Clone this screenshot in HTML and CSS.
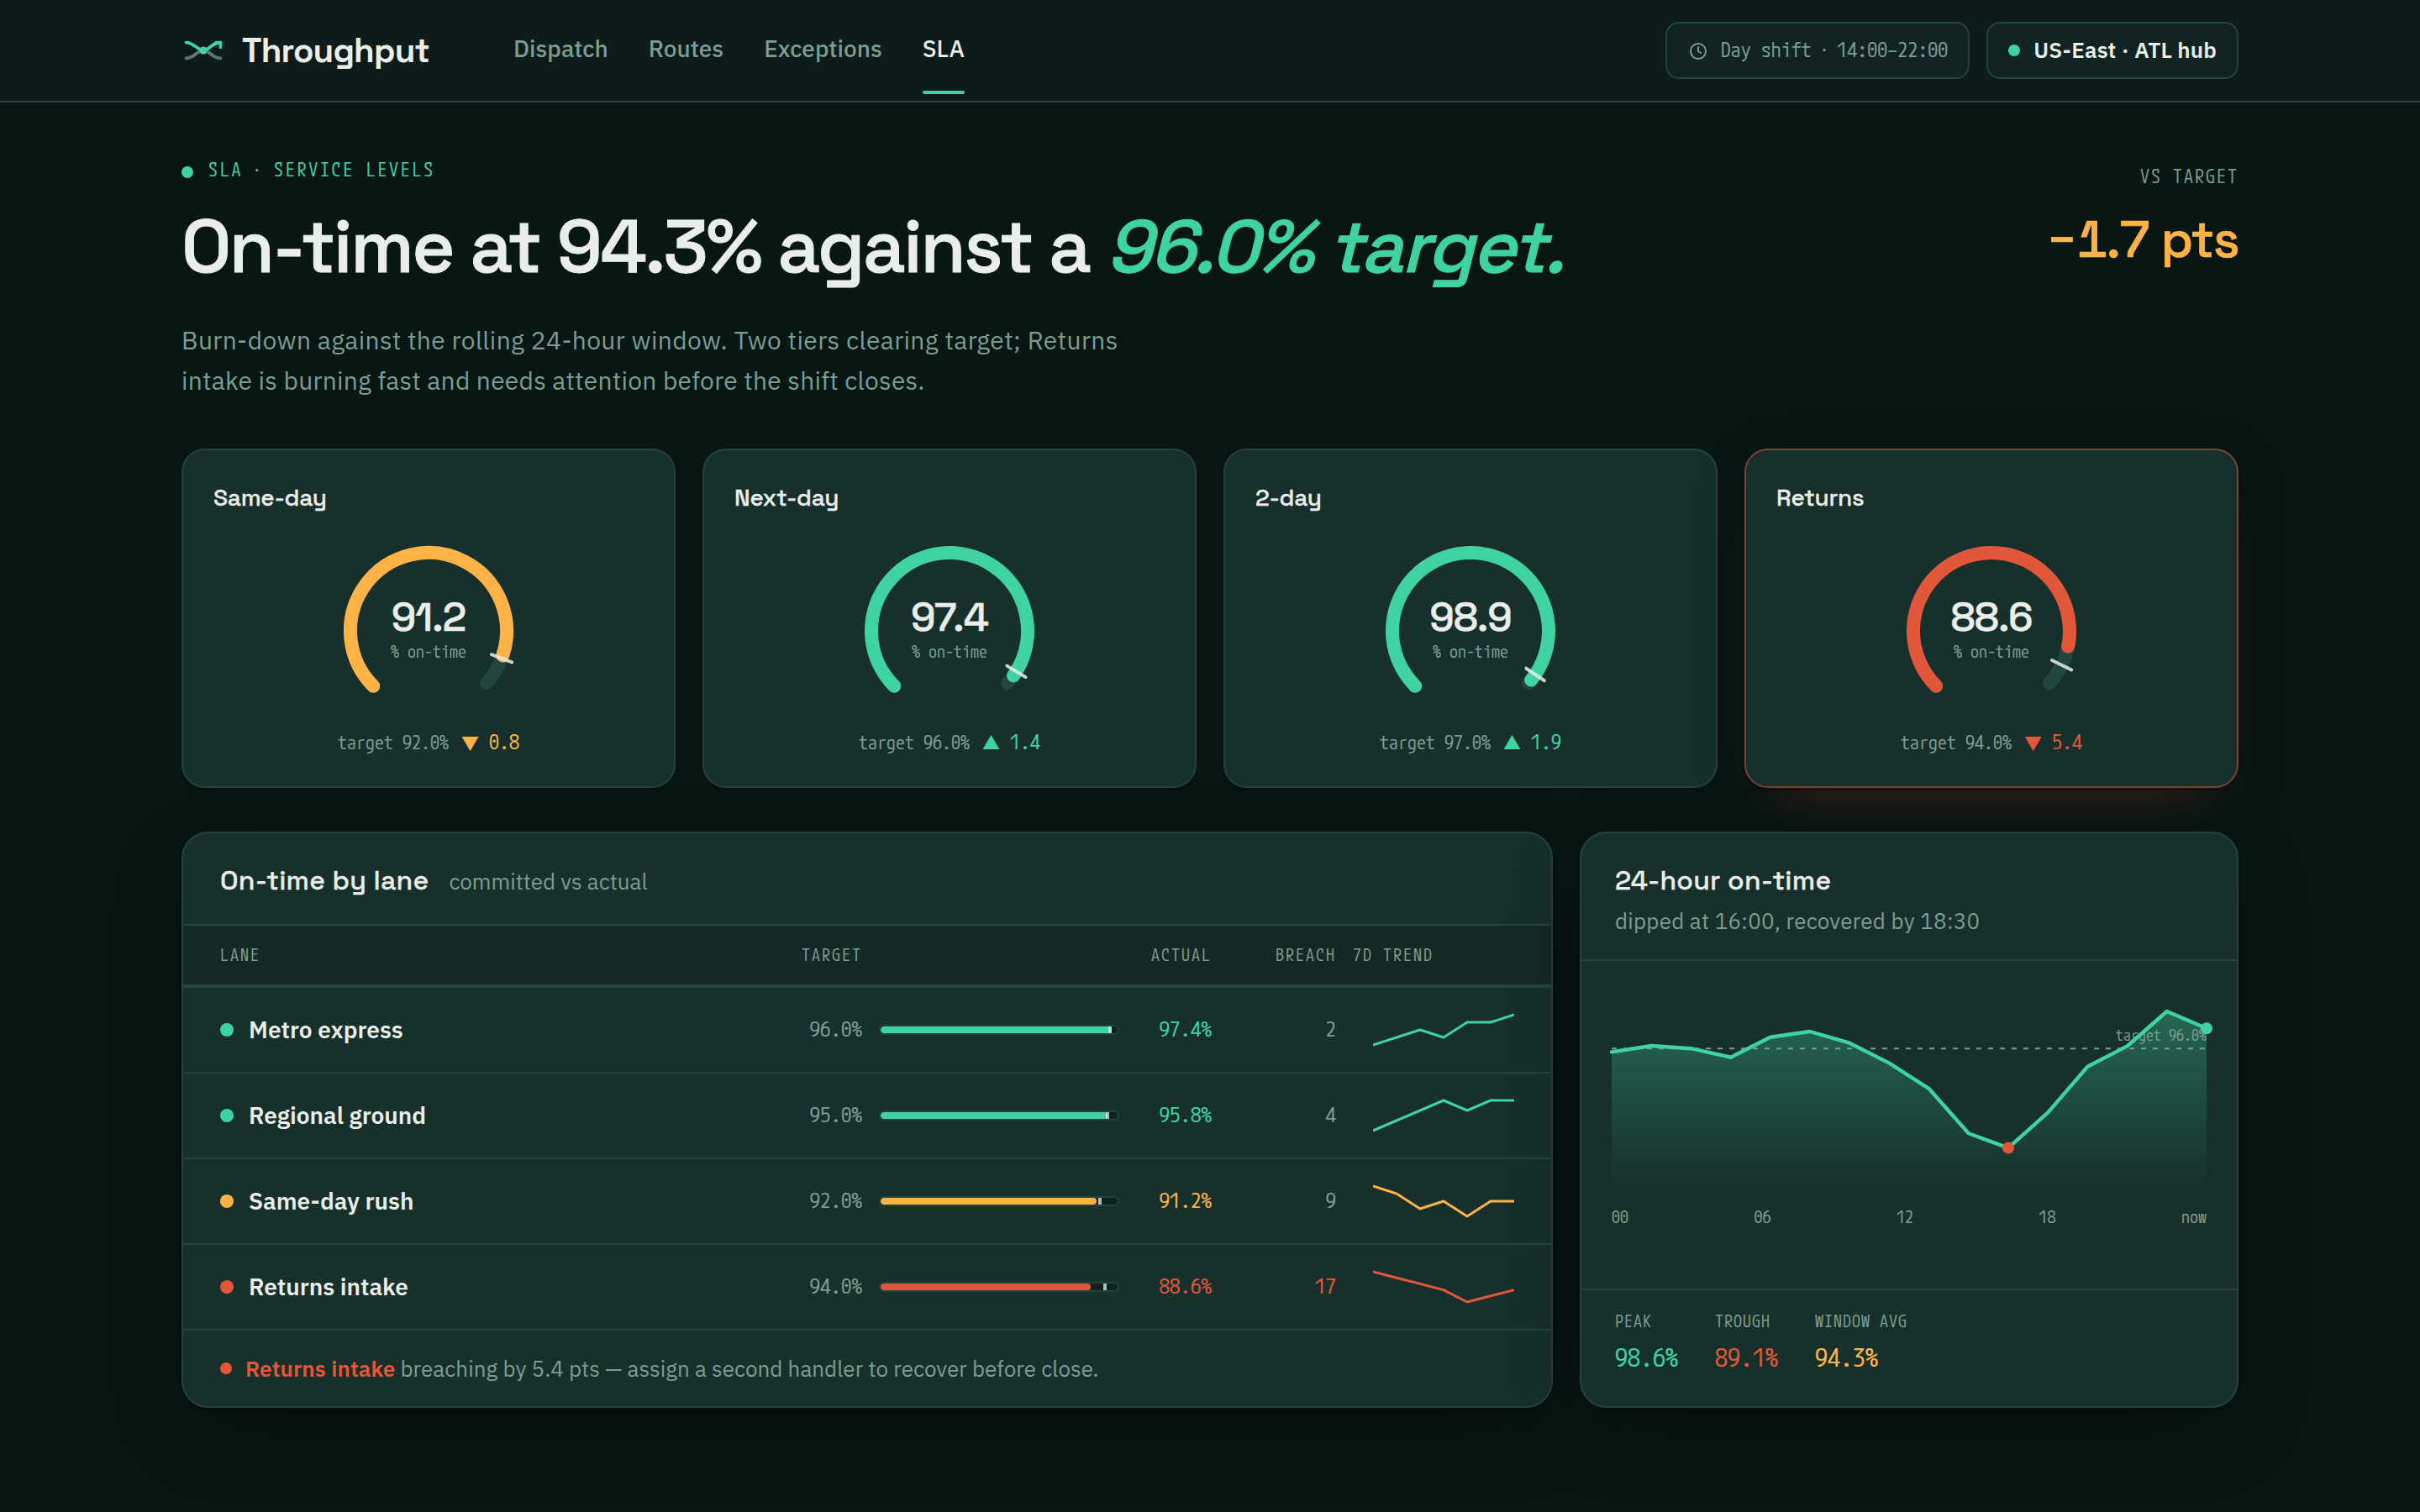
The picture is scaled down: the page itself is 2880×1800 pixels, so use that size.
FILE: index.html
```html
<!DOCTYPE html>
<html lang="en">
<head>
    <meta charset="UTF-8">
    <meta name="viewport" content="width=device-width, initial-scale=1.0">
    <title>Throughput - SLA</title>
    <link rel="stylesheet" href="styles.css">
</head>
<body>
    <header class="topbar">
        <div class="brand">
            <svg width="52" height="48" viewBox="0 0 52 48" fill="none" stroke-width="3.8" stroke-linecap="round">
                <path d="M5.5 33.3C15 33.3 19 24 26 24S37 33.3 46.5 33.3" stroke="#7c9d92" stroke-opacity="0.7"/>
                <path d="M5.5 14.6C15 14.6 19 24 26 24S36 14.6 46.5 14.6" stroke="#3fd3a2"/>
                <path d="M41 14.6h5.5v5.6" stroke="#3fd3a2" stroke-linejoin="round"/>
                <circle cx="26" cy="24" r="4.6" fill="#3fd3a2"/>
            </svg>
            <span class="brand-name">Throughput</span>
        </div>
        <nav class="nav">
            <a class="nav-link">Dispatch</a>
            <a class="nav-link">Routes</a>
            <a class="nav-link">Exceptions</a>
            <a class="nav-link active">SLA</a>
        </nav>
        <div class="chips">
            <div class="chip shift">
                <svg width="24" height="24" viewBox="0 0 24 24" fill="none" stroke="#7c9d92" stroke-width="2" stroke-linecap="round" stroke-linejoin="round">
                    <circle cx="13" cy="13" r="9"/>
                    <path d="M13 8v5l3.2 2"/>
                </svg>
                <span class="chip-text">Day shift <span class="mid">·</span> 14:00–22:00</span>
            </div>
            <div class="chip hub">
                <i class="dot green"></i>
                <span class="chip-text">US-East · ATL hub</span>
            </div>
        </div>
    </header>

    <main class="page">
        <section class="hero">
            <div>
                <div class="eyebrow"><i class="dot green"></i><span>SLA <span class="mid">·</span> SERVICE LEVELS</span></div>
                <h1>On-time at 94.3% against a <em>96.0% target.</em></h1>
                <p class="lead">Burn-down against the rolling 24-hour window. Two tiers clearing target; Returns<br><span class="tight">intake is burning fast and needs attention before the shift closes.</span></p>
            </div>
            <div class="versus">
                <div class="versus-label">VS TARGET</div>
                <div class="versus-value">−1.7 pts</div>
            </div>
        </section>

        <section class="tiers" id="tiers"></section>

        <section class="panels">
            <div class="panel lanes">
                <div class="panel-head">
                    <h2>On-time by lane</h2>
                    <span class="sub">committed vs actual</span>
                </div>
                <div class="lane-row lane-labels">
                    <span>LANE</span>
                    <span class="num">TARGET</span>
                    <span class="num actual-label">ACTUAL</span>
                    <span class="num">BREACH</span>
                    <span>7D TREND</span>
                </div>
                <div id="lanes"></div>
                <div class="notice"><i class="dot red"></i><span><b>Returns intake</b> breaching by 5.4 pts — assign a second handler to recover before close.</span></div>
            </div>

            <div class="panel window">
                <div class="window-head">
                    <h2>24-hour on-time</h2>
                    <span class="sub">dipped at 16:00, recovered by 18:30</span>
                </div>
                <div class="chart">
                    <svg width="708" height="240" viewBox="0 0 708 240">
                        <defs>
                            <linearGradient id="fade" x1="0" y1="0" x2="0" y2="1">
                                <stop offset="0" stop-color="#3fd3a2" stop-opacity="0.34"/>
                                <stop offset="1" stop-color="#3fd3a2" stop-opacity="0"/>
                            </linearGradient>
                        </defs>
                        <path id="area" fill="url(#fade)"/>
                        <line x1="0" y1="68.2" x2="708" y2="68.2" class="goal"/>
                        <text x="708" y="59" text-anchor="end" class="goal-label">target 96.0%</text>
                        <polyline id="line" class="trace"/>
                        <circle cx="472" cy="186.6" r="7" fill="#e2573a"/>
                        <circle cx="708" cy="44.3" r="7" fill="#3fd3a2"/>
                    </svg>
                    <div class="axis"><span>00</span><span>06</span><span>12</span><span>18</span><span>now</span></div>
                </div>
                <div class="stats">
                    <div><div class="stat-label">PEAK</div><div class="stat-value green-text">98.6%</div></div>
                    <div><div class="stat-label">TROUGH</div><div class="stat-value red-text">89.1%</div></div>
                    <div><div class="stat-label">WINDOW AVG</div><div class="stat-value amber-text">94.3%</div></div>
                </div>
            </div>
        </section>
    </main>

    <script src="script.js"></script>
</body>
</html>
```
FILE: styles.css
```css
* {
    box-sizing: border-box;
}
body {
    margin: 0;
    width: 2880px;
    height: 1800px;
    overflow: hidden;
    background: #091714;
    color: #e9eeea;
    font-family: "IBM Plex Sans", "Inter", sans-serif;
}
h1, h2, h3, p {
    margin: 0;
    font-weight: 500;
}
h1, h2, h3, .brand-name, .versus-value {
    font-family: "Space Grotesk", "Inter", sans-serif;
}
h2, h3 {
    -webkit-text-stroke: 0.3px;
}

/* top bar */
.topbar {
    height: 122px;
    padding: 0 216px;
    display: flex;
    align-items: center;
    background: #0e1b1b;
    border-bottom: 2px solid #23453f;
}
.brand {
    display: flex;
    align-items: center;
    gap: 20px;
}
.brand-name {
    padding-top: 1px;
    font-size: 40px;
    font-weight: 600;
    letter-spacing: -0.8px;
    line-height: 48px;
}
.nav {
    display: flex;
    gap: 48px;
    margin-left: 100px;
}
.nav-link {
    position: relative;
    padding-bottom: 4px;
    font-size: 28px;
    font-weight: 500;
    line-height: 36px;
    color: #7c9d92;
}
.nav-link.active {
    color: #e9eeea;
}
.nav-link.active::after {
    content: '';
    position: absolute;
    left: 0;
    right: 0;
    bottom: -32px;
    height: 4px;
    border-radius: 2px;
    background: #3fd3a2;
}
.chips {
    display: flex;
    gap: 20px;
    margin-left: auto;
}
.chip {
    height: 68px;
    padding: 0 24px;
    display: flex;
    align-items: center;
    gap: 16px;
    white-space: nowrap;
    background: #112421;
    border: 2px solid #23453f;
    border-radius: 16px;
}
.chip-text {
    padding-bottom: 2px;
    line-height: 32px;
}
.mid {
    font-family: "Noto Sans", sans-serif;
    line-height: 1;
}
.shift, .eyebrow, .versus-label, .foot, .lane-labels, .num, .axis, .stat-label, .stat-value, .goal-label, .gauge-unit {
    font-family: "M PLUS 1 Code", "Noto Sans Mono CJK JP", monospace;
}
.shift {
    font-size: 24px;
    color: #7c9d92;
}
.hub {
    font-size: 26px;
    font-weight: 600;
    letter-spacing: 0.15px;
}
.dot {
    flex: none;
    width: 14px;
    height: 14px;
    border-radius: 50%;
}
.green { background: #3fd3a2; }
.amber { background: #ffb347; }
.red { background: #e2573a; }
.green-text { color: #3fd3a2; }
.amber-text { color: #ffb347; }
.red-text { color: #e2573a; }

/* hero */
.page {
    padding: 64px 216px 0;
}
.hero {
    height: 348px;
    display: flex;
    justify-content: space-between;
}
.eyebrow {
    display: flex;
    align-items: center;
    gap: 18px;
    height: 36px;
    font-size: 22px;
    letter-spacing: 2.7px;
    line-height: 32px;
    color: #3fd3a2;
}
.eyebrow > span {
    padding-bottom: 4px;
}
.eyebrow .mid {
    margin-right: 1px;
}
.eyebrow .dot {
    margin-top: 2px;
}
h1 {
    margin-top: 24px;
    font-size: 88px;
    line-height: 96px;
    letter-spacing: -2.36px;
    white-space: nowrap;
    -webkit-text-stroke: 1px;
}
h1 em {
    letter-spacing: -2.2px;
    color: #3fd3a2;
}
.lead {
    margin-top: 39px;
    font-size: 30px;
    font-weight: 400;
    line-height: 48px;
    letter-spacing: 0.36px;
    color: #7c9d92;
}
.tight {
    letter-spacing: 0.24px;
}
.versus {
    padding-top: 8px;
    text-align: right;
}
.versus-label {
    font-size: 22px;
    line-height: 32px;
    letter-spacing: 2px;
    color: #7c9d92;
}
.versus-value {
    margin-top: 24px;
    font-size: 60px;
    font-weight: 500;
    line-height: 72px;
    letter-spacing: -1.4px;
    font-variant-numeric: tabular-nums;
    -webkit-text-stroke: 0.7px;
    color: #ffb347;
}

/* tier gauges */
.tiers {
    display: grid;
    grid-template-columns: repeat(4, 1fr);
    gap: 32px;
}
.tier {
    height: 404px;
    padding: 38px 36px 0;
    background: #17302b;
    border: 2px solid #23453f;
    border-radius: 28px;
    box-shadow: 0 2px 4px rgba(0, 0, 0, 0.35);
}
.tier.breach {
    border-color: #7a4337;
    box-shadow: 0 2px 4px rgba(0, 0, 0, 0.35), 0 36px 60px -36px rgba(226, 87, 58, 0.3), 0 16px 60px rgba(0, 0, 0, 0.25);
}
.tier h3 {
    font-size: 28px;
    line-height: 36px;
    letter-spacing: -0.28px;
}
.gauge {
    display: block;
    margin: 34px auto 0;
}
.gauge path {
    fill: none;
    stroke-width: 16;
    stroke-linecap: round;
}
.gauge .track {
    stroke: #23453f;
}
.gauge .tick {
    stroke: #e9eeea;
    stroke-width: 4;
    opacity: 0.85;
}
.gauge-value {
    font: 500 48px "Space Grotesk", "Inter", sans-serif;
    letter-spacing: -0.96px;
    fill: #e9eeea;
    stroke: #e9eeea;
    stroke-width: 0.5px;
}
.gauge-unit {
    font-size: 20px;
    fill: #7c9d92;
}
.foot {
    margin-top: 33px;
    display: flex;
    justify-content: center;
    align-items: baseline;
    font-size: 22px;
    line-height: 32px;
    color: #7c9d92;
}
.arrow {
    margin: 0 12px 0 15px;
    font-size: 21px;
}
.delta {
    font-size: 24px;
}

/* panels */
.panels {
    margin-top: 52px;
    display: grid;
    grid-template-columns: 1632px 784px;
    gap: 32px;
}
.panel {
    height: 686px;
    background: #17302b;
    border: 2px solid #23453f;
    border-radius: 32px;
    overflow: hidden;
    box-shadow: 0 2px 4px rgba(0, 0, 0, 0.35), 0 32px 96px -16px rgba(0, 0, 0, 0.4);
}
.panel-head {
    height: 110px;
    padding: 36px 44px 0;
    display: flex;
    align-items: baseline;
    gap: 24px;
    border-bottom: 2px solid #23453f;
}
h2 {
    font-size: 32px;
    line-height: 40px;
    letter-spacing: 0.22px;
}
.sub {
    font-size: 26px;
    line-height: 36px;
    color: #7c9d92;
}
.lane-row {
    height: 102px;
    padding: 0 44px;
    display: grid;
    grid-template-columns: 644px 100px 286px 90px 128px 192px;
    gap: 20px;
    align-items: center;
    border-bottom: 2px solid #23453f;
}
.lane-labels {
    height: 74px;
    padding-bottom: 1px;
    background: #152926;
    border-bottom-width: 4px;
    font-size: 20px;
    letter-spacing: 2px;
    color: #7c9d92;
}
.num {
    text-align: right;
}
.actual-label {
    grid-column: span 2;
}
.lane-row:not(.lane-labels) .num {
    padding-bottom: 4px;
    font-size: 25px;
}
.muted {
    color: #7c9d92;
}
.lane-name {
    display: flex;
    align-items: center;
    gap: 18px;
    font-size: 28px;
    font-weight: 600;
}
.lane-name span {
    padding-bottom: 1px;
}
.lane-name .dot {
    width: 16px;
    height: 16px;
}
.bar {
    position: relative;
    height: 12px;
    background: #0f211f;
    border: 2px solid #23453f;
    border-radius: 6px;
    overflow: hidden;
}
.bar-fill {
    height: 8px;
    border-radius: 4px;
}
.bar-tick {
    position: absolute;
    top: 0;
    width: 4px;
    height: 8px;
    background: #e9eeea;
    opacity: 0.75;
}
.spark {
    justify-self: end;
    fill: none;
    stroke-width: 3;
    stroke-linejoin: round;
}
.notice {
    height: 90px;
    padding: 0 44px;
    display: flex;
    align-items: center;
    gap: 16px;
    font-size: 26px;
    letter-spacing: 0.03px;
    color: #7c9d92;
}
.notice b {
    font-weight: 600;
    letter-spacing: 0.15px;
    color: #e2573a;
}

/* 24-hour window */
.window {
    display: flex;
    flex-direction: column;
}
.window-head {
    height: 152px;
    padding: 36px 40px 0;
    border-bottom: 2px solid #23453f;
}
.window-head .sub {
    display: block;
    margin-top: 10px;
    letter-spacing: 0.23px;
}
.chart {
    height: 390px;
    padding: 36px 36px 0;
}
.chart svg {
    display: block;
    overflow: visible;
}
.goal {
    stroke: #7c9d92;
    stroke-width: 2;
    stroke-dasharray: 6 8;
}
.goal-label {
    font-size: 18px;
    fill: #7c9d92;
}
.trace {
    fill: none;
    stroke: #3fd3a2;
    stroke-width: 4.4;
    stroke-linecap: round;
    stroke-linejoin: round;
}
.axis {
    margin-top: 15px;
    display: flex;
    justify-content: space-between;
    font-size: 20px;
    line-height: 28px;
    color: #7c9d92;
}
.stats {
    height: 140px;
    padding: 23px 40px 0;
    display: flex;
    gap: 44px;
    border-top: 2px solid #23453f;
}
.stat-label {
    font-size: 20px;
    line-height: 28px;
    letter-spacing: 1px;
    color: #7c9d92;
}
.stat-value {
    margin-top: 9px;
    font-size: 30px;
    line-height: 40px;
}
```
FILE: script.js
```js
const colors = { green: '#3fd3a2', amber: '#ffb347', red: '#e2573a' };

const tiers = [
    { name: 'Same-day', value: 91.2, target: 92, arrow: '▼', delta: '0.8', tone: 'amber' },
    { name: 'Next-day', value: 97.4, target: 96, arrow: '▲', delta: '1.4', tone: 'green' },
    { name: '2-day', value: 98.9, target: 97, arrow: '▲', delta: '1.9', tone: 'green' },
    { name: 'Returns', value: 88.6, target: 94, arrow: '▼', delta: '5.4', tone: 'red' }
];

const lanes = [
    { name: 'Metro express', target: 96, actual: 97.4, breach: 2, tone: 'green', trend: [40, 31, 22, 31, 13, 13, 4] },
    { name: 'Regional ground', target: 95, actual: 95.8, breach: 4, tone: 'green', trend: [40, 28, 16, 4, 16, 4, 4] },
    { name: 'Same-day rush', target: 92, actual: 91.2, breach: 9, tone: 'amber', trend: [4, 13, 31, 22, 40, 22, 22] },
    { name: 'Returns intake', target: 94, actual: 88.6, breach: 17, tone: 'red', trend: [4, 11.2, 18.4, 25.6, 40, 32.8, 25.6] }
];

// y position of every sample in the 24-hour chart
const samples = [72.3, 65, 68.2, 78.7, 54.8, 48, 61.7, 85.6, 116, 169.2, 186.6, 144.4, 89.7, 65.4, 24, 44.3];

// the gauge starts at the lower left and sweeps 267 degrees
const SWEEP = 267;

function point(percent, radius) {
    const angle = (135 + percent / 100 * SWEEP) * Math.PI / 180;
    return (107 + radius * Math.cos(angle)).toFixed(2) + ' ' + (107 + radius * Math.sin(angle)).toFixed(2);
}

function arc(percent) {
    return `M${point(0, 93)}A93 93 0 1 1 ${point(percent, 93)}`;
}

document.getElementById('tiers').innerHTML = tiers.map(t => `
    <div class="tier ${t.tone === 'red' ? 'breach' : ''}">
        <h3>${t.name}</h3>
        <svg class="gauge" width="214" height="190" viewBox="0 0 214 190">
            <path class="track" d="${arc(100)}"/>
            <path d="${arc(t.value)}" stroke="${colors[t.tone]}"/>
            <path class="tick" d="M${point(t.target, 80)}L${point(t.target, 106)}"/>
            <text class="gauge-value" x="107" y="107" text-anchor="middle">${t.value.toFixed(1)}</text>
            <text class="gauge-unit" x="107" y="138.5" text-anchor="middle">% on-time</text>
        </svg>
        <div class="foot"><span>target ${t.target.toFixed(1)}%</span><span class="arrow ${t.tone}-text">${t.arrow}</span><span class="delta ${t.tone}-text">${t.delta}</span></div>
    </div>`).join('');

document.getElementById('lanes').innerHTML = lanes.map(l => `
    <div class="lane-row">
        <div class="lane-name"><i class="dot ${l.tone}"></i><span>${l.name}</span></div>
        <span class="num muted">${l.target.toFixed(1)}%</span>
        <div class="bar"><div class="bar-fill ${l.tone}" style="width: ${l.actual}%"></div><div class="bar-tick" style="left: ${l.target}%"></div></div>
        <span class="num ${l.tone}-text">${l.actual.toFixed(1)}%</span>
        <span class="num ${l.tone === 'red' ? 'red-text' : 'muted'}">${l.breach}</span>
        <svg class="spark" width="168" height="44" viewBox="0 0 168 44" stroke="${colors[l.tone]}"><polyline points="${l.trend.map((y, i) => i * 28 + ',' + y).join(' ')}"/></svg>
    </div>`).join('');

const line = samples.map((y, i) => (i * 47.2).toFixed(1) + ',' + y);
document.getElementById('line').setAttribute('points', line.join(' '));
document.getElementById('area').setAttribute('d', 'M0,232L' + line.join('L') + 'L708,232Z');
```
